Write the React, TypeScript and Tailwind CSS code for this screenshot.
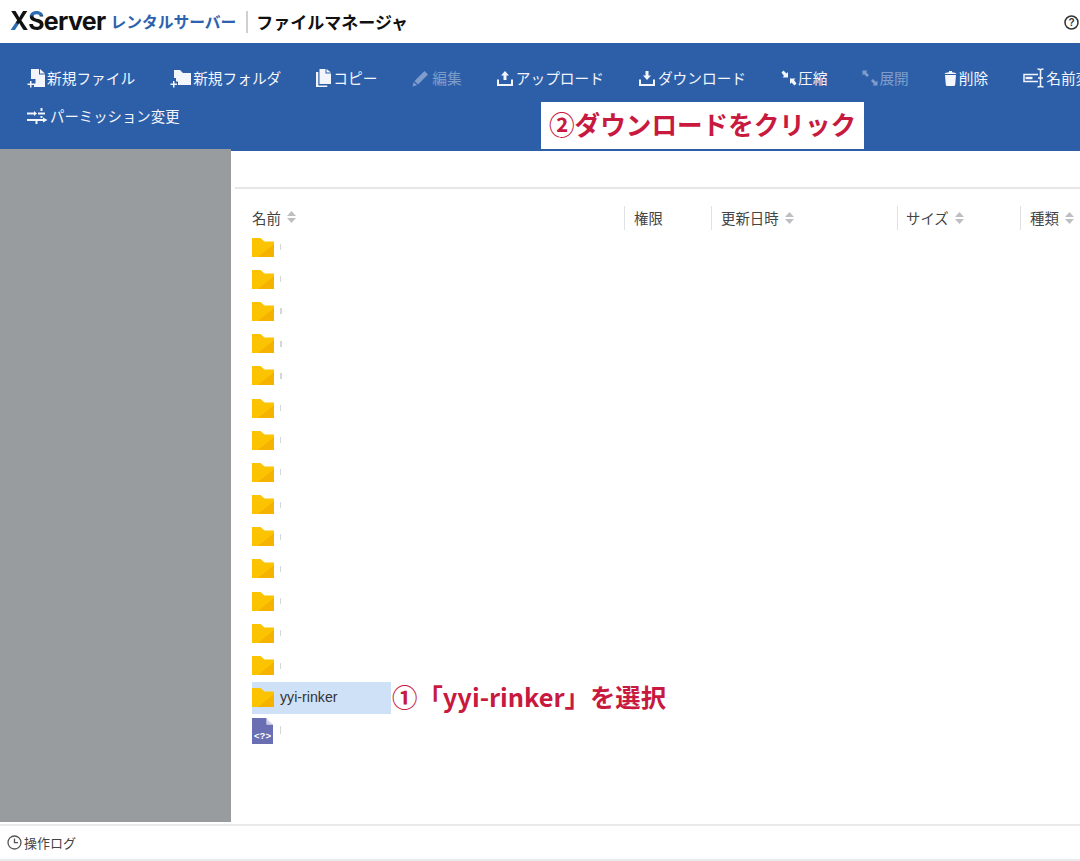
import type { ReactNode } from 'react';

const jp = { fontFamily: '"Noto Sans CJK JP", "Noto Sans", sans-serif' };

function NewFileIcon() {
  return (
    <svg width="19" height="20" viewBox="0 0 19 20" fill="currentColor">
      <path d="M4 1h8v5.500h6V19H7v-3.500h1.500V11H4z" />
      <path d="M13 1l5 4.500h-5z" />
      <path d="M3 13h1.500v2.500H7V17H4.500v2.500H3V17H.5v-1.500H3z" />
    </svg>
  );
}

function NewFolderIcon() {
  return (
    <svg width="21" height="20" viewBox="0 0 21 20" fill="currentColor">
      <path d="M4 2h6l3 3h8v12H8v-3.500H6V10H4z" />
      <path d="M3 13h1.500v2.500H7V17H4.500v2.500H3V17H.5v-1.500H3z" />
    </svg>
  );
}

function CopyIcon() {
  return (
    <svg width="15" height="18" viewBox="0 0 15 18" fill="currentColor">
      <path d="M3.500 0h6v4.500H15V15H3.500z" />
      <path d="M10.500 0L15 3.500h-4.500z" />
      <path d="M0 3h2.300v13.500h9V18H0z" />
    </svg>
  );
}

function PencilIcon() {
  return (
    <svg width="17" height="17" viewBox="0 0 17 17" fill="currentColor">
      <path d="M12.500 1l3.500 3.500L6 14.500 2.500 11z" />
      <path d="M1.800 12l3.200 3.200L.5 16.500z" />
    </svg>
  );
}

function UploadIcon() {
  return (
    <svg width="16" height="16" viewBox="0 0 16 16" fill="currentColor">
      <path d="M8 1l4 4.500H9.500V10h-3V5.500H4z" />
      <path d="M0 9.500h2V14h12V9.500h2V16H0z" />
    </svg>
  );
}

function DownloadIcon() {
  return (
    <svg width="16" height="16" viewBox="0 0 16 16" fill="currentColor">
      <path d="M6.500 1h3v4.500H12L8 10 4 5.500h2.500z" />
      <path d="M0 9.500h2V14h12V9.500h2V16H0z" />
    </svg>
  );
}

function CompressIcon() {
  return (
    <svg width="16" height="16" viewBox="0 0 16 16" fill="currentColor">
      <path d="M.5 2.500L2.500 .5 5.500 3.500 7 2v5.500H1.500L3 6z" />
      <path d="M15.500 13.500l-2 2-3-3L9 14V8.500h5.500L13 10z" />
    </svg>
  );
}

function ExpandIcon() {
  return (
    <svg width="16" height="16" viewBox="0 0 16 16" fill="currentColor">
      <path d="M.5 .5h5L4 2l3 3-2 2-3-3-1.500 1.500z" />
      <path d="M15.500 15.500h-5L12 14l-3-3 2-2 3 3 1.500-1.500z" />
    </svg>
  );
}

function TrashIcon() {
  return (
    <svg width="13" height="16" viewBox="0 0 13 16" fill="currentColor">
      <path d="M5 1h3v1.200c2.200.2 4 .7 4.500 1.800H.5C1 2.900 2.800 2.400 5 2.200z" />
      <path d="M1 5h11l-.8 9.500c-.1 1-.8 1.500-1.700 1.500h-6c-.9 0-1.600-.5-1.700-1.500z" />
    </svg>
  );
}

function RenameIcon() {
  return (
    <svg width="22" height="20" viewBox="0 0 22 20" fill="none" stroke="currentColor" strokeWidth="1.500">
      <path d="M15 6.500H1V13.500H15" />
      <rect x="2.500" y="8.800" width="7" height="2.400" fill="currentColor" stroke="none" />
      <path d="M17.500 2v16M14.500 1c1.500 0 3 .5 3 1.500 0-1 1.500-1.500 3-1.500M14.500 19c1.500 0 3-.5 3-1.500 0 1 1.500 1.500 3 1.500M15 10h5" />
    </svg>
  );
}

function PermissionIcon() {
  return (
    <svg width="21" height="16" viewBox="0 0 21 16" fill="currentColor">
      <path d="M0 4.500h7V3l3 2.500L7 8V6.500H0z" />
      <rect x="11" y="4.500" width="7" height="2" />
      <path d="M13.500 0h2v3h-2zM13.500 8h2v2h-2z" />
      <path d="M0 11h16V9.500l4.500 2.500L16 14.500V13H0z" />
      <rect x="8.500" y="13" width="2" height="3" />
    </svg>
  );
}

function SortIcon() {
  return (
    <svg width="9" height="12" viewBox="0 0 9 12" fill="#bdbfc2" className="ml-[6px] shrink-0">
      <path d="M4.500 0L9 5H0z" />
      <path d="M4.500 12L9 7H0z" />
    </svg>
  );
}

function FolderIcon() {
  return (
    <svg width="22" height="19" viewBox="0 0 22 19" className="shrink-0">
      <path d="M0 0h8.500l4 3.500H22V19H0z" fill="#fcc400" />
      <path d="M22 6v13H6z" fill="#f6b200" />
    </svg>
  );
}

function PhpFileIcon() {
  return (
    <svg width="21" height="26" viewBox="0 0 21 26" className="mt-[2px] shrink-0">
      <path d="M0 0h14l7 7v19H0z" fill="#6a6fb4" />
      <path d="M14.500 .5v6h6z" fill="#fff" />
      <path d="M15 2l4.500 4.500H15z" fill="#c9cbe4" />
      <text x="10.500" y="21" fontSize="9.500" fontWeight="700" fill="#fff" textAnchor="middle" fontFamily="Liberation Sans, sans-serif">{'<?>'}</text>
    </svg>
  );
}

function ToolItem({ icon, label, dim, box, className }: { icon: ReactNode; label: string; dim?: boolean; box: string; className?: string }) {
  return (
    <div className={`flex h-[38px] shrink-0 items-center whitespace-nowrap ${dim ? 'text-[#7f9dcb]' : 'text-[#f2f5fb]'} ${className ?? ''}`}>
      <span className={`flex items-center ${box}`}>{icon}</span>
      <span>{label}</span>
    </div>
  );
}

const marks = ['w-[1px]', 'w-[1px]', 'w-[2px]', 'w-[2px]', 'w-[2px]', 'w-[1px]', 'w-[1px]', 'w-[1px]', 'w-[1px]', 'w-[1px]', 'w-[1px]', 'w-[1px]', 'w-[1px]', 'w-[1px]'];

function HeaderCell({ label, sort = true, className }: { label: string; sort?: boolean; className: string }) {
  return (
    <div className={`flex h-[24px] shrink-0 items-center border-l border-[#dfe1e3] ${className}`}>
      <span>{label}</span>
      {sort && <SortIcon />}
    </div>
  );
}

export default function App() {
  return (
    <div className="flex h-[861px] w-[1080px] flex-col overflow-hidden bg-white text-[#333]" style={jp}>
      <header className="flex h-[43px] shrink-0 items-center pl-[10px]">
        <span
          className="bg-[linear-gradient(45deg,#2d6db5_0%,#2d6db5_40%,#111_46%)] bg-clip-text text-[25px] font-bold tracking-[-0.3px] text-transparent"
          style={{ fontFamily: 'Inter, sans-serif' }}
        >
          X
        </span>
        <span
          className="bg-[linear-gradient(180deg,#2d6db5_0%,#2d6db5_32%,#111_38%)] bg-clip-text text-[25px] font-bold tracking-[-0.7px] text-transparent"
          style={{ fontFamily: 'Inter, sans-serif' }}
        >
          S
        </span>
        <span className="text-[25px] font-bold tracking-[-0.7px] text-[#111]" style={{ fontFamily: 'Inter, sans-serif' }}>
          erver
        </span>
        <span className="ml-[5px] whitespace-nowrap text-[15.75px] font-bold text-[#2d62ad]">レンタルサーバー</span>
        <span className="ml-[10px] h-[22px] w-[2px] bg-[#d0d0d0]" />
        <span className="ml-[8px] whitespace-nowrap text-[17px] font-bold text-[#111]">ファイルマネージャ</span>
        <svg width="15" height="15" viewBox="0 0 15 15" className="ml-auto mr-[1px] mt-[1px] shrink-0" fill="none">
          <circle cx="7.500" cy="7.500" r="6.500" stroke="#333" strokeWidth="1.500" />
          <text x="7.500" y="11" fontSize="10" fontWeight="700" fill="#333" textAnchor="middle" fontFamily="Liberation Sans, sans-serif">?</text>
        </svg>
      </header>

      <section className="relative h-[108px] shrink-0 bg-[#2d5fa9] pl-[27px] pt-[16px] text-[14.7px]">
        <div className="flex gap-[35px]">
          <ToolItem icon={<NewFileIcon />} label="新規ファイル" box="w-[20px]" />
          <ToolItem icon={<NewFolderIcon />} label="新規フォルダ" box="w-[23px]" />
          <ToolItem icon={<CopyIcon />} label="コピー" box="w-[17px]" />
          <ToolItem icon={<PencilIcon />} label="編集" dim box="w-[20px]" />
          <ToolItem icon={<UploadIcon />} label="アップロード" box="w-[19px]" />
          <ToolItem icon={<DownloadIcon />} label="ダウンロード" box="w-[19px]" />
          <ToolItem icon={<CompressIcon />} label="圧縮" box="w-[17px]" />
          <ToolItem icon={<ExpandIcon />} label="展開" dim box="w-[17px]" />
          <ToolItem icon={<TrashIcon />} label="削除" box="w-[15px]" />
          <ToolItem icon={<RenameIcon />} label="名前変更" box="w-[23px]" />
        </div>
        <ToolItem icon={<PermissionIcon />} label="パーミッション変更" box="w-[23px]" className="text-[14.4px]" />
        <div className="absolute left-[541px] top-[59px] flex h-[47px] w-[323px] items-center whitespace-nowrap bg-white pb-[3px] pl-[8px] text-[25.6px] font-bold text-[#c8193f]">
          ②ダウンロードをクリック
        </div>
      </section>

      <div className="flex min-h-0 flex-1">
        <aside className="relative -mt-[2px] w-[231px] shrink-0 bg-[#999c9f]" />
        <main className="relative min-w-0 flex-1 text-[14.4px] text-[#444]">
          <div className="ml-[4px] mt-[36px] h-[2px] bg-[#e6e7e8]" />
          <div className="ml-[21px] mt-[17px] flex h-[24px] items-center pb-[1px]">
            <div className="flex w-[372px] shrink-0 items-center">
              <span>名前</span>
              <SortIcon />
            </div>
            <HeaderCell label="権限" sort={false} className="w-[87px] pl-[9px]" />
            <HeaderCell label="更新日時" className="w-[186px] pl-[9px]" />
            <HeaderCell label="サイズ" className="w-[123px] pl-[8px]" />
            <HeaderCell label="種類" className="w-[80px] pl-[9px]" />
          </div>

          <ul className="ml-[21px] mt-[1px]">
            {marks.map((mark, i) => (
              <li key={i} className="flex h-[32.2px] items-center">
                <FolderIcon />
                <span className={`ml-[6px] h-[6px] ${mark} bg-[#d5d6d8]`} />
              </li>
            ))}
            <li className="flex h-[32.2px] w-[139px] items-center bg-[#cfe1f7]">
              <FolderIcon />
              <span className="ml-[6px] text-[14.2px] text-[#333]" style={{ fontFamily: '"Liberation Sans", sans-serif' }}>
                yyi-rinker
              </span>
            </li>
            <li className="flex h-[32.2px] items-center">
              <PhpFileIcon />
              <span className="ml-[7px] h-[8px] w-[1px] bg-[#d5d6d8]" />
            </li>
          </ul>

          <div className="absolute left-[161px] top-[526px] whitespace-nowrap text-[25.4px] font-bold text-[#c8193f]">
            ①「yyi-rinker」を選択
          </div>
        </main>
      </div>

      <footer className="mt-[2px] flex h-[37px] shrink-0 items-center border-y-2 border-[#e9eaeb] pl-[7px] text-[13px] text-[#444]">
        <svg width="15" height="15" viewBox="0 0 15 15" fill="none" stroke="#555" strokeWidth="1.300">
          <circle cx="7.500" cy="7.500" r="6.500" />
          <path d="M7.500 3.500v4.200h3.500" />
        </svg>
        <span className="ml-[2px]">操作ログ</span>
      </footer>
    </div>
  );
}
